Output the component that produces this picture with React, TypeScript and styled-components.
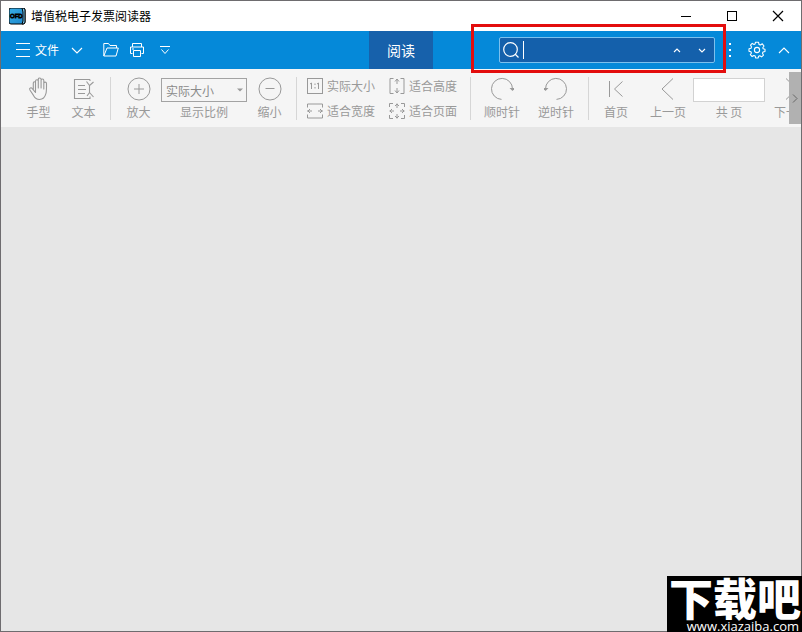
import React from "react";
import styled, { createGlobalStyle } from "styled-components";

const GlobalStyle = createGlobalStyle`
  *, *::before, *::after { box-sizing: border-box; }
  body { margin: 0; background: #e6e6e6; }
  body, button, input, select {
    font-family: "Noto Sans CJK SC", "Liberation Sans", sans-serif;
    font-size: 12px;
  }
  button { border: 0; padding: 0; margin: 0; background: none; color: inherit; cursor: pointer; }
  svg { display: block; flex: none; fill: none; stroke: currentColor; }
`;

const Window = styled.div`
  position: relative;
  display: flex;
  flex-direction: column;
  min-height: 100vh;
  border: 1px solid #6e6c6f;
  background: #e6e6e6;
`;

const TitleBar = styled.header`
  display: flex;
  align-items: center;
  height: 30px;
  padding-left: 8px;
  background: #fff;
  color: #000;
`;

const Title = styled.h1`
  flex: 1;
  margin: 0 0 0 5px;
  font-size: 12px;
  line-height: 18px;
  font-weight: 400;
`;

const WindowButton = styled.button`
  display: flex;
  align-items: center;
  justify-content: center;
  width: 46px;
  height: 30px;
`;

const MenuBar = styled.nav`
  display: grid;
  grid-template-columns: 1fr auto 1fr;
  height: 38px;
  background: #0589d9;
  color: #fff;
`;

const MenuSide = styled.div<{ $end?: boolean }>`
  display: flex;
  align-items: center;
  justify-content: ${(p) => (p.$end ? "flex-end" : "flex-start")};
  padding: ${(p) => (p.$end ? "0 7px 0 0" : "0 0 0 14px")};
`;

const FileButton = styled.button`
  display: flex;
  align-items: center;
  gap: 4px;
  height: 38px;
  margin-right: 6px;
  line-height: 18px;
`;

const BarButton = styled.button<{ $width: number }>`
  display: flex;
  align-items: center;
  justify-content: center;
  width: ${(p) => p.$width}px;
  height: 38px;
`;

const QuickAccess = styled.div`
  display: flex;
  margin-left: 9px;
`;

const Tab = styled.button`
  width: 64px;
  height: 38px;
  background: #1761ab;
  font-size: 14px;
  line-height: 20px;
`;

const SearchBox = styled.div`
  position: relative;
  display: flex;
  align-items: center;
  width: 216px;
  height: 26px;
  margin-right: 5px;
  padding-left: 3px;
  border: 1px solid #7cc0ee;
  border-radius: 2px;
  background: #1460ab;
`;

const Caret = styled.span`
  flex: none;
  width: 1px;
  height: 18px;
  margin-left: 4px;
  background: #fff;
`;

const SearchInput = styled.input`
  flex: 1;
  min-width: 0;
  border: 0;
  padding: 0;
  outline: 0;
  background: transparent;
  color: #fff;
`;

const SearchStep = styled.button`
  display: flex;
  align-items: center;
  justify-content: center;
  width: 25px;
  height: 24px;
`;

const Highlight = styled.div`
  position: absolute;
  inset: -14px -12px -11px -29px;
  border: 3px solid #e30d0d;
  pointer-events: none;
`;

const Ribbon = styled.div`
  display: flex;
  align-items: flex-start;
  height: 58px;
  background: #f5f5f5;
  color: #999;
`;

const RibbonTrack = styled.div`
  display: flex;
  flex: 1;
  min-width: 0;
  padding-top: 8px;
  overflow: hidden;
`;

const Group = styled.div<{ $left?: number; $right?: number; $last?: boolean }>`
  display: flex;
  flex: none;
  height: 43px;
  padding: 0 ${(p) => p.$right ?? 4}px 0 ${(p) => p.$left ?? 4}px;
  border-right: ${(p) => (p.$last ? "0" : "1px solid #d6d6d6")};
`;

const ToolButton = styled.button<{ $width: number }>`
  display: flex;
  flex-direction: column;
  align-items: center;
  gap: 3px;
  width: ${(p) => p.$width}px;
  line-height: 16px;
  white-space: nowrap;
`;

const Field = styled.label<{ $width: number }>`
  display: flex;
  flex-direction: column;
  align-items: center;
  gap: 2px;
  width: ${(p) => p.$width}px;
  line-height: 16px;
  padding-top: 1px;
`;

const SelectFrame = styled.span`
  display: flex;
  align-items: center;
  width: 100%;
  height: 24px;
  border: 1px solid #a3a3a3;
  padding-right: 3px;
`;

const ZoomSelect = styled.select`
  flex: 1;
  min-width: 0;
  height: 22px;
  padding: 0 0 0 4px;
  border: 0;
  outline: 0;
  appearance: none;
  background: transparent;
  color: #8a8a8a;
`;

const PageInput = styled.input`
  width: 100%;
  height: 24px;
  border: 1px solid #d2d2d2;
  background: #fff;
`;

const FitGrid = styled.div`
  display: grid;
  grid-template-columns: auto auto;
  column-gap: 14px;
  row-gap: 7px;
`;

const FitButton = styled.button`
  display: flex;
  align-items: center;
  gap: 4px;
  height: 18px;
  line-height: 18px;
  white-space: nowrap;
`;

const ScrollButton = styled.button`
  display: flex;
  flex: none;
  align-items: center;
  justify-content: center;
  width: 12px;
  height: 52px;
  margin-top: 3px;
  background: #b1b1b1;
  color: #666;
`;

const Canvas = styled.main`
  flex: 1;
  background: #e6e6e6;
`;

const Watermark = styled.div`
  position: absolute;
  right: -1px;
  bottom: -1px;
  width: 135px;
  height: 56px;
  overflow: hidden;
  background: #000;
  color: #fff;
  text-align: right;
`;

const WatermarkName = styled.div`
  padding-right: 1px;
  font-size: 44px;
  line-height: 43px;
  font-weight: 900;
`;

const WatermarkUrl = styled.div`
  padding-right: 3px;
  font-family: "Open Sans", "Noto Sans", sans-serif;
  font-size: 13px;
  line-height: 14px;
`;

const AppIcon = () => (
  <svg width="17" height="17" viewBox="0 0 17 17" stroke="none">
    <defs>
      <linearGradient id="appIcon" x1="0" y1="0" x2="1" y2="1">
        <stop offset="0" stopColor="#3aaee6" />
        <stop offset="1" stopColor="#1b86cc" />
      </linearGradient>
    </defs>
    <rect x="0" y="0" width="16" height="16" rx="2" fill="url(#appIcon)" />
    <path d="M13 0h1a2 2 0 0 1 2 2v12a2 2 0 0 1-2 2h-1l1-3V4z" fill="#7bc9ee" />
    <text x="1" y="10" fontSize="6" fontFamily="Liberation Sans, sans-serif" fill="#d9f1fc">OFD</text>
  </svg>
);

const Chevron = ({ w, h, up }: { w: number; h: number; up?: boolean }) => (
  <svg width={w + 2} height={h + 2} viewBox={`0 0 ${w + 2} ${h + 2}`} strokeWidth="1.1">
    <path d={up ? `M1 ${h + 1}L${w / 2 + 1} 1L${w + 1} ${h + 1}` : `M1 1L${w / 2 + 1} ${h + 1}L${w + 1} 1`} />
  </svg>
);

const Icon = ({ children, size = 24, width = 1 }: { children: React.ReactNode; size?: number; width?: number }) => (
  <svg width={size} height={size} viewBox={`0 0 ${size} ${size}`} strokeWidth={width}>
    {children}
  </svg>
);

const HandIcon = () => (
  <Icon width={1.1}>
    <path
      strokeLinecap="round"
      strokeLinejoin="round"
      d="M8.5 13.5V4.2c0-2 2.8-2 2.8 0V11M11.3 10.5V2.3c0-1.8 2.8-1.8 2.8 0V11M14.1 10.5V3.4c0-1.8 2.7-1.8 2.7 0V12M16.8 11V6.5c0-1.8 2.7-1.8 2.7 0 0 3 .2 7.500-.6 10.200-.9 3.500-2.900 5.800-6.400 5.800-3.200 0-4.700-1.700-6-4.100L2.900 13c-1-1.900 1.200-3 2.400-1.400l3.200 3.900V4.500M6.300 12.500V6c0-1.600 2.200-1.700 2.200 0"
    />
  </Icon>
);

const TextIcon = () => (
  <Icon width={1.1}>
    <path d="M18 2.500H2.500V21.500H18V19.500M18 2.500V4M6 8.500H13M6 12.500H14M6 16.500H13" />
    <path d="M14.500 4.500L17.500 8.500M21.500 5L17.500 8.500V15.500L15 19M17.500 15.500L21.500 20" />
  </Icon>
);

const ZoomInIcon = () => (
  <Icon>
    <circle cx="12" cy="12" r="11" />
    <path d="M7 12H17M12 7V17" />
  </Icon>
);

const ZoomOutIcon = () => (
  <Icon>
    <circle cx="12" cy="12" r="11" />
    <path d="M7.500 11.500H16.500" />
  </Icon>
);

const ActualIcon = () => (
  <Icon size={16}>
    <rect x="0.500" y="0.500" width="15" height="15" />
    <path d="M3 6L4.500 5V11M10 6L11.500 5V11M8 5.500V7M8 9V10.500" />
  </Icon>
);

const FitHeightIcon = () => (
  <Icon size={16}>
    <path d="M4.500 .5H1V15.500H4.500M11.500 .5H15V15.500H11.500" />
    <path d="M8 1V6M6 3.500L8 1L10 3.500M8 10V15M6 12.500L8 15L10 12.500" />
  </Icon>
);

const FitWidthIcon = () => (
  <Icon size={16}>
    <path d="M.5 4.500V1H15.500V4.500M.5 11.500V15H15.500V11.500" />
    <path d="M0 8H5M3 6L1 8L3 10M11 8H16M13 6L15 8L13 10" />
  </Icon>
);

const FitPageIcon = () => (
  <Icon size={16}>
    <path d="M4 .5H.5V4M12 .5H15.500V4M.5 12V15.500H4M15.500 12V15.500H12" />
    <path d="M8 .5V5M6 3L8 1L10 3M8 11V15.500M6 13L8 15L10 13M.5 8H5M3 6L1 8L3 10M11 8H15.500M13 6L15 8L13 10" />
  </Icon>
);

const ClockwiseIcon = () => (
  <Icon>
    <path d="M11.500 22.400A10.500 10.500 0 1 1 22.500 12" />
    <path d="M19.500 11H25L22.500 14Z" fill="currentColor" stroke="none" />
  </Icon>
);

const CounterIcon = () => (
  <Icon>
    <path d="M12.500 22.400A10.500 10.500 0 1 0 1.500 12" />
    <path d="M-1 11H4.500L1.500 14Z" fill="currentColor" stroke="none" />
  </Icon>
);

const FirstIcon = () => (
  <Icon>
    <path d="M5.500 4V20M18.500 4.500L10.500 12L18.500 19.500" />
  </Icon>
);

const PrevIcon = () => (
  <Icon>
    <path d="M17 1.500L6 12L17 22.500" />
  </Icon>
);

const NextIcon = () => (
  <Icon>
    <path d="M6 1.500L17 12L6 22.500" />
  </Icon>
);

const FolderIcon = () => (
  <Icon size={16}>
    <path d="M.8 14V1.500H5.500L7 3.500H13.500V6M.8 14H13L15.300 6H4L.8 14" strokeLinejoin="round" />
  </Icon>
);

const PrinterIcon = () => (
  <Icon size={16}>
    <path d="M3.500 5V1.500H12.500V5M3.500 11.500H1.500V5H14.500V11.500H12.500M4.500 8.500H11.500V14.500H4.500ZM3 7H5" />
  </Icon>
);

const GearIcon = () => (
  <svg width="18" height="18" viewBox="0 0 18 18" strokeWidth="1.100" strokeLinejoin="round">
    <path d="M7.500 1.200H10.500L11 3.400L12.400 4L14.300 2.800L16 5L14.800 6.700L15.200 7.800L17 8.200V10.500L15 11L14.500 12.300L15.500 14.200L13.600 15.900L11.800 14.700L10.600 15.200L10.200 17H7.600L7.200 15L5.900 14.500L4.100 15.500L2.300 13.700L3.400 12L2.900 10.800L1 10.300V7.700L3 7.200L3.500 5.900L2.500 4.100L4.200 2.400L6 3.500L7.100 3Z" />
    <circle cx="9" cy="9" r="2.600" />
  </svg>
);

export default function App() {
  return (
    <>
      <GlobalStyle />
      <Window>
        <TitleBar>
          <AppIcon />
          <Title>增值税电子发票阅读器</Title>
          <WindowButton aria-label="最小化">
            <Icon size={12}><path d="M1 6.500H11" /></Icon>
          </WindowButton>
          <WindowButton aria-label="最大化">
            <Icon size={12}><rect x="1.500" y="1.500" width="9" height="9" /></Icon>
          </WindowButton>
          <WindowButton aria-label="关闭">
            <Icon size={12} width={1.2}><path d="M1 1L11 11M11 1L1 11" /></Icon>
          </WindowButton>
        </TitleBar>

        <MenuBar>
          <MenuSide>
            <FileButton>
              <Icon size={16}><path d="M1 1.500H15M1 7.500H15M1 14.500H15" /></Icon>
              文件
            </FileButton>
            <BarButton $width={24} aria-label="文件菜单"><Chevron w={10} h={5} /></BarButton>
            <QuickAccess>
              <BarButton $width={26} aria-label="打开"><FolderIcon /></BarButton>
              <BarButton $width={26} aria-label="打印"><PrinterIcon /></BarButton>
              <BarButton $width={30} aria-label="更多">
                <Icon size={12}><path d="M1 2.500H11M2.500 5.500L6 9.500L9.500 5.500" /></Icon>
              </BarButton>
            </QuickAccess>
          </MenuSide>
          <Tab>阅读</Tab>
          <MenuSide $end>
            <SearchBox>
              <Icon size={16} width={1.2}>
                <circle cx="7.500" cy="7.500" r="6.800" />
                <path d="M12 12L15.500 15.500" />
              </Icon>
              <Caret />
              <SearchInput aria-label="搜索" />
              <SearchStep aria-label="上一个"><Chevron w={6} h={3} up /></SearchStep>
              <SearchStep aria-label="下一个"><Chevron w={6} h={3} /></SearchStep>
              <Highlight />
            </SearchBox>
            <BarButton $width={20} aria-label="选项">
              <svg width="2" height="14" viewBox="0 0 2 14" strokeWidth="2">
                <path d="M1 0V2M1 6V8M1 12V14" />
              </svg>
            </BarButton>
            <BarButton $width={34} aria-label="设置"><GearIcon /></BarButton>
            <BarButton $width={20} aria-label="收起"><Chevron w={10} h={5} up /></BarButton>
          </MenuSide>
        </MenuBar>

        <Ribbon>
          <RibbonTrack>
            <Group $left={15}>
              <ToolButton $width={45}><HandIcon />手型</ToolButton>
              <ToolButton $width={45}><TextIcon />文本</ToolButton>
            </Group>
            <Group $left={5}>
              <ToolButton $width={45}><ZoomInIcon />放大</ToolButton>
              <Field $width={86}>
                <SelectFrame>
                  <ZoomSelect defaultValue="实际大小">
                    <option>实际大小</option>
                    <option>适合宽度</option>
                    <option>适合高度</option>
                    <option>适合页面</option>
                  </ZoomSelect>
                  <svg width="6" height="4" viewBox="0 0 6 4">
                    <path d="M0 .5H6L3 3.500Z" fill="currentColor" stroke="none" />
                  </svg>
                </SelectFrame>
                显示比例
              </Field>
              <ToolButton $width={45}><ZoomOutIcon />缩小</ToolButton>
            </Group>
            <Group $left={10} $right={13}>
              <FitGrid>
                <FitButton><ActualIcon />实际大小</FitButton>
                <FitButton><FitHeightIcon />适合高度</FitButton>
                <FitButton><FitWidthIcon />适合宽度</FitButton>
                <FitButton><FitPageIcon />适合页面</FitButton>
              </FitGrid>
            </Group>
            <Group $right={5}>
              <ToolButton $width={54}><ClockwiseIcon />顺时针</ToolButton>
              <ToolButton $width={54}><CounterIcon />逆时针</ToolButton>
            </Group>
            <Group $left={0} $last>
              <ToolButton $width={54}><FirstIcon />首页</ToolButton>
              <ToolButton $width={50}><PrevIcon />上一页</ToolButton>
              <Field $width={72}>
                <PageInput />
                共 页
              </Field>
              <ToolButton $width={54}><NextIcon />下一页</ToolButton>
            </Group>
          </RibbonTrack>
          <ScrollButton aria-label="向右滚动">
            <svg width="6" height="9" viewBox="0 0 6 9"><path d="M1 .5L5 4.500L1 8.500" /></svg>
          </ScrollButton>
        </Ribbon>

        <Canvas />

        <Watermark>
          <WatermarkName>下载吧</WatermarkName>
          <WatermarkUrl>www.xiazaiba.com</WatermarkUrl>
        </Watermark>
      </Window>
    </>
  );
}
